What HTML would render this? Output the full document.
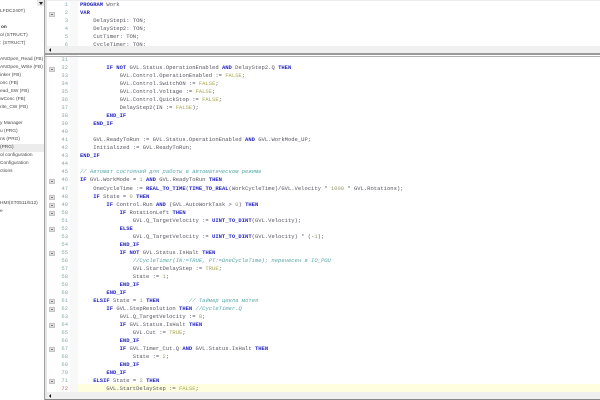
<!DOCTYPE html>
<html><head><meta charset="utf-8">
<style>
html,body{margin:0;padding:0;background:#fff}
#r{position:relative;width:600px;height:400px;overflow:hidden;background:#fff;filter:blur(.35px)}
.a{position:absolute}
pre{margin:0;font-family:"Liberation Mono",monospace;font-size:5.5px;line-height:8.025px;color:#555560;white-space:pre}
.k{color:#2a2ac4;font-weight:bold}
.b{color:#a8a850}
.n{color:#9a9a70}
.c{color:#58a8a8;font-style:italic}
.ln{text-align:right;color:#8aa8b4;width:30px}
.f{position:absolute;left:49px;width:4px;height:3px;background:#e0e0e0;border:.5px solid #c4c4c4;box-sizing:content-box}
.f:after{content:"";position:absolute;left:1px;top:1px;width:2px;height:1px;background:#777}
</style></head><body>
<div id="r">
<!-- left tree -->
<div class="a" style="left:0;top:0;width:44px;height:400px;background:#fff"></div>
<div class="a" style="left:0;top:144px;width:44px;height:8px;background:#ececec"></div>
<div class="a" style="left:37px;top:0;width:7px;height:6px;background:#e8e8e8"></div>
<div class="a" style="left:38.5px;top:2px;width:0;height:0;border-left:2.5px solid transparent;border-right:2.5px solid transparent;border-top:3px solid #222"></div>
<div style="font-family:'Liberation Sans',sans-serif;font-size:4.8px;line-height:8px;color:#4a4a4a;white-space:nowrap">
<div class="a" style="left:0;top:8px">LFDC240T)</div>
<div class="a" style="left:1px;top:24px;font-weight:bold;color:#333">on</div>
<div class="a" style="left:0;top:32px">ol (STRUCT)</div>
<div class="a" style="left:0;top:40px">: (STRUCT)</div>
<div class="a" style="left:0;top:56px">ANOpen_Read (FB)</div>
<div class="a" style="left:0;top:64px">ANOpen_Write (FB)</div>
<div class="a" style="left:0;top:72px">inker (FB)</div>
<div class="a" style="left:0;top:80px">onc (FB)</div>
<div class="a" style="left:0;top:88px">ead_SW (FB)</div>
<div class="a" style="left:0;top:96px">wConc (FB)</div>
<div class="a" style="left:0;top:104px">rite_CW (FB)</div>
<div class="a" style="left:0;top:120px">y Manager</div>
<div class="a" style="left:0;top:128px">u (PRG)</div>
<div class="a" style="left:0;top:136px">ns (PRG)</div>
<div class="a" style="left:0;top:144px">(PRG)</div>
<div class="a" style="left:0;top:152px">ol configuration</div>
<div class="a" style="left:0;top:160px">Configuration</div>
<div class="a" style="left:0;top:168px">ctions</div>
<div class="a" style="left:0;top:200px">HMI(ST0511/512)</div>
<div class="a" style="left:0;top:208px">e</div>
</div>
<div class="a" style="left:44px;top:0;width:1px;height:400px;background:#a0a0a0"></div>
<div class="a" style="left:45px;top:0;width:2px;height:400px;background:#e4e4e4"></div>
<!-- gutter tints -->
<div class="a" style="left:70px;top:0;width:8px;height:400px;background:#f8f8f8"></div>
<!-- top pane -->
<div class="a" style="left:47px;top:0;width:553px;height:1px;background:#eee"></div>
<pre class="a ln" style="left:38px;top:1px;height:45px;overflow:hidden">
1
2
3
4
5
6</pre>
<pre class="a" style="left:80px;top:1px;height:45px;overflow:hidden">
<span class="k">PROGRAM</span> Work
<span class="k">VAR</span>
    DelayStep1: TON;
    DelayStep2: TON;
    CutTimer: TON;
    CycleTimer: TON;</pre>
<div class="f" style="top:12px"></div>
<div class="a" style="left:47px;top:46px;width:553px;height:7px;background:#f0f0f0"></div>
<div class="a" style="left:49px;top:48px;width:0;height:0;border-top:2px solid transparent;border-bottom:2px solid transparent;border-right:2.5px solid #111"></div>
<div class="a" style="left:45px;top:53px;width:555px;height:2px;background:#9a9a9a"></div>
<div class="a" style="left:45px;top:56px;width:555px;height:1px;background:#b0b0b0"></div>
<!-- bottom pane -->
<div class="a" style="left:78px;top:384px;width:522px;height:8px;background:#ffffe0"></div>
<pre class="a ln" style="left:38px;top:56px;height:336px;overflow:hidden">
31
32
33
34
35
36
37
38
39
40
41
42
43
44
45
46
47
48
49
50
51
52
53
54
55
56
57
58
59
60
61
62
63
64
65
66
67
68
69
70
71
<span style="color:#d06060">72</span></pre>
<pre class="a" style="left:80px;top:56px;height:336px;overflow:hidden">

        <span class="k">IF NOT</span> GVL.Status.OperationEnabled <span class="k">AND</span> DelayStep2.Q <span class="k">THEN</span>
            GVL.Control.OperationEnabled := <span class="b">FALSE</span>;
            GVL.Control.SwitchON := <span class="b">FALSE</span>;
            GVL.Control.Voltage := <span class="b">FALSE</span>;
            GVL.Control.QuickStop := <span class="b">FALSE</span>;
            DelayStep2(IN := <span class="b">FALSE</span>);
        <span class="k">END_IF</span>
    <span class="k">END_IF</span>

    GVL.ReadyToRun := GVL.Status.OperationEnabled <span class="k">AND</span> GVL.WorkMode_UP;
    Initialized := GVL.ReadyToRun;
<span class="k">END_IF</span>

<span class="c">// Автомат состояний для работы в автоматическом режиме</span>
<span class="k">IF</span> GVL.WorkMode = <span class="n">1</span> <span class="k">AND</span> GVL.ReadyToRun <span class="k">THEN</span>
    OneCycleTime := <span class="k">REAL_TO_TIME</span>(<span class="k">TIME_TO_REAL</span>(WorkCycleTime)/GVL.Velocity * <span class="n">1000</span> * GVL.Rotations);
    <span class="k">IF</span> State = <span class="n">0</span> <span class="k">THEN</span>
        <span class="k">IF</span> Control.Run <span class="k">AND</span> (GVL.AutoWorkTask &gt; <span class="n">0</span>) <span class="k">THEN</span>
            <span class="k">IF</span> RotationLeft <span class="k">THEN</span>
                GVL.Q_TargetVelocity := <span class="k">UINT_TO_DINT</span>(GVL.Velocity);
            <span class="k">ELSE</span>
                GVL.Q_TargetVelocity := <span class="k">UINT_TO_DINT</span>(GVL.Velocity) * (-<span class="n">1</span>);
            <span class="k">END_IF</span>
            <span class="k">IF NOT</span> GVL.Status.IsHalt <span class="k">THEN</span>
                <span class="c">//CycleTimer(IN:=TRUE, PT:=OneCycleTime); перенесен в IO_POU</span>
                GVL.StartDelayStep := <span class="b">TRUE</span>;
                State := <span class="n">1</span>;
            <span class="k">END_IF</span>
        <span class="k">END_IF</span>
    <span class="k">ELSIF</span> State = <span class="n">1</span> <span class="k">THEN</span>         <span class="c">// Таймер цикла мотея</span>
        <span class="k">IF</span> GVL.StepResolution <span class="k">THEN</span> <span class="c">//CycleTimer.Q</span>
            GVL.Q_TargetVelocity := <span class="n">0</span>;
            <span class="k">IF</span> GVL.Status.IsHalt <span class="k">THEN</span>
                GVL.Cut := <span class="b">TRUE</span>;
            <span class="k">END_IF</span>
            <span class="k">IF</span> GVL.Timer_Cut.Q <span class="k">AND</span> GVL.Status.IsHalt <span class="k">THEN</span>
                State := <span class="n">2</span>;
            <span class="k">END_IF</span>
        <span class="k">END_IF</span>
    <span class="k">ELSIF</span> State = <span class="n">2</span> <span class="k">THEN</span>
        GVL.StartDelayStep := <span class="b">FALSE</span>;</pre>
<!-- fold markers -->
<div class="f" style="top:67px"></div>
<div class="f" style="top:179px"></div>
<div class="f" style="top:195px"></div>
<div class="f" style="top:203px"></div>
<div class="f" style="top:211px"></div>
<div class="f" style="top:227px"></div>
<div class="f" style="top:251px"></div>
<div class="f" style="top:299px"></div>
<div class="f" style="top:307px"></div>
<div class="f" style="top:323px"></div>
<div class="f" style="top:347px"></div>
<div class="f" style="top:379px"></div>
<!-- bottom scrollbar -->
<div class="a" style="left:47px;top:392px;width:553px;height:7px;background:#f0f0f0"></div>
<div class="a" style="left:49px;top:394px;width:0;height:0;border-top:2px solid transparent;border-bottom:2px solid transparent;border-right:2.5px solid #111"></div>
<div class="a" style="left:45px;top:399px;width:555px;height:1px;background:#888"></div>
</div>
</body></html>
